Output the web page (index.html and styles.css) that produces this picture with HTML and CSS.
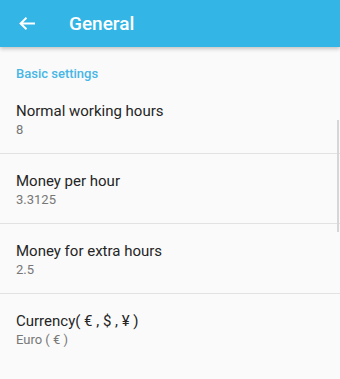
FILE: index.html
```html
<!DOCTYPE html>
<html lang="en">
  <head>
    <meta charset="UTF-8" />
    <meta name="viewport" content="width=device-width, initial-scale=1.0" />
    <title>General</title>
    <link rel="stylesheet" href="styles.css">
  </head>
  <body>
    <header class="toolbar">
      <button class="back-btn" aria-label="Back">
        <svg width="16" height="13" viewBox="0 0 16 13">
          <path d="M1.5 6.5H16M7.5 0.8L1.6 6.5L7.5 12.2" fill="none" stroke="#fff" stroke-width="2" />
        </svg>
      </button>
      <h1 class="toolbar-title">General</h1>
    </header>
    <main class="settings">
      <div class="category">Basic settings</div>
      <div class="pref">
        <div class="pref-title">Normal working hours</div>
        <div class="pref-value">8</div>
      </div>
      <div class="pref">
        <div class="pref-title">Money per hour</div>
        <div class="pref-value">3.3125</div>
      </div>
      <div class="pref">
        <div class="pref-title">Money for extra hours</div>
        <div class="pref-value">2.5</div>
      </div>
      <div class="pref last">
        <div class="pref-title">Currency( € , $ , ¥ )</div>
        <div class="pref-value">Euro ( € )</div>
      </div>
    </main>
    <div class="scroll-thumb"></div>
  </body>
</html>
```

FILE: styles.css
```css
* {
  margin: 0;
  padding: 0;
  box-sizing: border-box;
}
body {
  font-family: Roboto, "Noto Sans", sans-serif;
  background: #fafafa;
  width: 340px;
  height: 379px;
  overflow: hidden;
  position: relative;
}
.toolbar {
  height: 47px;
  background: #33b5e5;
  display: flex;
  align-items: center;
  padding-left: 19px;
  box-shadow: 0 2px 4px rgba(0, 0, 0, 0.22);
  position: relative;
  z-index: 2;
}
.back-btn {
  background: none;
  border: none;
  width: 16px;
  height: 13px;
  display: flex;
}
.toolbar-title {
  color: #fff;
  font-size: 19px;
  font-weight: 500;
  margin-left: 34px;
  line-height: 24px;
}
.category {
  color: #47b6e6;
  font-size: 13px;
  font-weight: 500;
  line-height: 16px;
  padding: 19px 16px 2px;
}
.pref {
  padding: 17px 16px 14px;
  border-bottom: 1px solid #e2e2e2;
}
.pref.last {
  border-bottom: none;
}
.pref-title {
  color: #252525;
  font-size: 15px;
  line-height: 20px;
}
.pref-value {
  color: #777;
  font-size: 13px;
  line-height: 18px;
}
.scroll-thumb {
  position: absolute;
  right: 1px;
  top: 120px;
  width: 2px;
  height: 112px;
  background: #d6d6d6;
}
```
